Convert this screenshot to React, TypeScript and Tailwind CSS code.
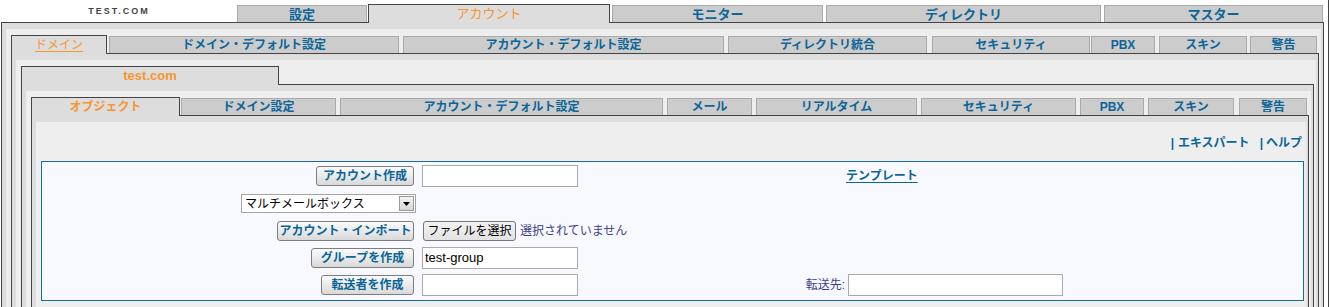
import React from 'react'

type Tab = { label: string; cls: string; active?: boolean; underline?: boolean }

const TOP_TABS: Tab[] = [
  { label: '設定', cls: 'w-[130px]' },
  { label: 'アカウント', cls: 'ml-[1px] w-[242px]', active: true },
  { label: 'モニター', cls: 'ml-[2px] w-[211px]' },
  { label: 'ディレクトリ', cls: 'ml-[3px] w-[275px]' },
  { label: 'マスター', cls: 'ml-[3px] w-[219px]' },
]

const DOMAIN_TABS: Tab[] = [
  { label: 'ドメイン', cls: 'w-[96px]', active: true, underline: true },
  { label: 'ドメイン・デフォルト設定', cls: 'ml-[2px] w-[290px]' },
  { label: 'アカウント・デフォルト設定', cls: 'ml-[4px] w-[321px]' },
  { label: 'ディレクトリ統合', cls: 'ml-[4px] w-[199px]' },
  { label: 'セキュリティ', cls: 'ml-[5px] w-[158px]' },
  { label: 'PBX', cls: 'ml-[1px] w-[64px]' },
  { label: 'スキン', cls: 'ml-[4px] w-[88px]' },
  { label: '警告', cls: 'ml-[3px] w-[67px]' },
]

const OBJECT_TABS: Tab[] = [
  { label: 'オブジェクト', cls: 'w-[149px]', active: true },
  { label: 'ドメイン設定', cls: 'ml-[1px] w-[155px]' },
  { label: 'アカウント・デフォルト設定', cls: 'ml-[4px] w-[323px]' },
  { label: 'メール', cls: 'ml-[4px] w-[85px]' },
  { label: 'リアルタイム', cls: 'ml-[4px] w-[161px]' },
  { label: 'セキュリティ', cls: 'ml-[4px] w-[155px]' },
  { label: 'PBX', cls: 'ml-[4px] w-[64px]' },
  { label: 'スキン', cls: 'ml-[4px] w-[86px]' },
  { label: '警告', cls: 'ml-[5px] w-[68px]' },
]

function TabButton({ tab, big }: { tab: Tab; big?: boolean }) {
  const size = big ? 'text-[13px]' : 'text-[12px]'
  if (tab.active) {
    return (
      <div
        className={`relative z-10 -mb-px flex h-[19px] shrink-0 items-center justify-center border-x border-t border-[#444] bg-[#ddd] pb-px leading-none text-[#f7962d] ${size} ${tab.cls} ${
          tab.underline ? 'underline underline-offset-2' : ''
        } ${big || tab.underline ? 'font-normal' : 'font-bold'}`}
      >
        {tab.label}
      </div>
    )
  }
  return (
    <div
      className={`flex h-[17px] shrink-0 items-center justify-center border-x border-t border-[#aaa] bg-[#ccc] font-bold leading-none text-[#0b6598] ${size} ${tab.cls}`}
    >
      {tab.label}
    </div>
  )
}

function TabRow({ tabs, big, children }: { tabs: Tab[]; big?: boolean; children?: React.ReactNode }) {
  return (
    <div className={`flex items-end border-b border-[#444] ${big ? 'h-[23px]' : 'h-[19px]'}`}>
      {children}
      {tabs.map((t) => (
        <TabButton key={t.label + t.cls} tab={t} big={big} />
      ))}
    </div>
  )
}

// dark-bordered panel with the grey frame and the lighter inner area
function Panel({ children, pb = 'pb-[10px]' }: { children: React.ReactNode; pb?: string }) {
  return (
    <div className="border-x border-b border-[#444] bg-[#ddd] pl-[4px] pr-[2px] pt-[6px] pb-[4px]">
      <div className={`bg-[#eee] pl-[5px] pr-[2px] pt-[6px] ${pb}`}>{children}</div>
    </div>
  )
}

function BlueButton({ label, w }: { label: string; w: string }) {
  return (
    <button
      className={`flex h-[20px] items-center justify-center rounded-[3px] border border-[#7d7d7d] bg-gradient-to-b from-[#fbfbfb] to-[#d9d9d9] text-[12px] font-bold leading-none text-[#0b6598] ${w}`}
    >
      {label}
    </button>
  )
}

function TextBox({ value, w }: { value?: string; w: string }) {
  return (
    <div
      className={`flex h-[22px] items-center border border-[#a9a9a9] bg-white px-[2px] text-[13px] leading-none text-black ${w}`}
    >
      {value}
    </div>
  )
}

function FormBox() {
  return (
    <div className="border border-[#1b6b9b] bg-[#f7f9fe] pb-px">
      {/* アカウント作成 */}
      <div className="flex h-[28px] items-center">
        <div className="flex w-[376px] justify-end pr-[4px]">
          <BlueButton label="アカウント作成" w="w-[98px]" />
        </div>
        <div className="ml-[4px]">
          <TextBox w="w-[156px]" />
        </div>
        <a className="ml-[268px] text-[12px] font-bold leading-none text-[#0b6598] underline underline-offset-2">
          テンプレート
        </a>
      </div>

      {/* type select */}
      <div className="flex h-[27px] items-center">
        <div className="flex w-[376px] justify-end pr-[2px]">
          <div className="flex h-[19px] w-[175px] items-center justify-between border border-[#a5a5a5] bg-white pl-[3px] pr-px text-[12px] leading-none text-black">
            <span>マルチメールボックス</span>
            <span className="flex h-[15px] w-[15px] items-center justify-center border border-[#9a9a9a] bg-gradient-to-b from-[#f4f4f4] to-[#d6d6d6]">
              <svg width="7" height="4" viewBox="0 0 7 4">
                <path d="M0 0h7L3.5 4z" fill="#000" />
              </svg>
            </span>
          </div>
        </div>
      </div>

      {/* インポート */}
      <div className="flex h-[27px] items-center">
        <div className="flex w-[376px] justify-end pr-[4px]">
          <BlueButton label="アカウント・インポート" w="w-[137px]" />
        </div>
        <button className="ml-[5px] flex h-[20px] w-[93px] items-center justify-center rounded-[3px] border border-[#767676] bg-gradient-to-b from-[#f3f3f3] to-[#e2e2e2] text-[12px] leading-none text-black">
          ファイルを選択
        </button>
        <span className="ml-[4px] text-[12px] leading-none text-[#3d3d8c]">選択されていません</span>
      </div>

      {/* グループ */}
      <div className="flex h-[27px] items-center">
        <div className="flex w-[376px] justify-end pr-[4px]">
          <BlueButton label="グループを作成" w="w-[103px]" />
        </div>
        <div className="ml-[4px]">
          <TextBox value="test-group" w="w-[156px]" />
        </div>
      </div>

      {/* 転送者 */}
      <div className="flex h-[28px] items-center">
        <div className="flex w-[376px] justify-end pr-[4px]">
          <BlueButton label="転送者を作成" w="w-[93px]" />
        </div>
        <div className="ml-[4px]">
          <TextBox w="w-[156px]" />
        </div>
        <span className="w-[267px] text-right text-[12px] leading-none text-[#3d3d8c]">転送先:</span>
        <div className="ml-[3px]">
          <TextBox w="w-[215px]" />
        </div>
      </div>
    </div>
  )
}

export default function App() {
  return (
    <div className="h-[307px] w-[1329px] overflow-hidden border-r border-[#444] bg-white pl-px font-['Liberation_Sans','Noto_Sans_CJK_JP',sans-serif]">
      <div className="w-[1323px]">
        <TabRow tabs={TOP_TABS} big>
          <div className="flex h-full w-[236px] shrink-0 items-center justify-center pt-[2px] text-[9px] font-bold tracking-[2px] text-[#444]">
            TEST.COM
          </div>
        </TabRow>
        <Panel>
          <TabRow tabs={DOMAIN_TABS} />
          <Panel>
            <div className="flex h-[19px] items-end border-b border-[#444]">
              <div className="relative z-10 -mb-px flex h-[19px] w-[258px] items-center justify-center border-x border-t border-[#444] bg-[#ddd] pb-px text-[13px] font-bold leading-none text-[#f7962d]">
                test.com
              </div>
            </div>
            <Panel>
              <TabRow tabs={OBJECT_TABS} />
              <Panel pb="pb-[20px]">
                <div className="flex h-[33px] justify-end pr-[2px] pt-[9px] text-[12px] font-bold leading-none text-[#0b6598]">
                  <span className="mr-[4px]">|</span>
                  <span>エキスパート</span>
                  <span className="ml-[10px] mr-[3px]">|</span>
                  <span>ヘルプ</span>
                </div>
                <FormBox />
              </Panel>
            </Panel>
          </Panel>
        </Panel>
      </div>
    </div>
  )
}
